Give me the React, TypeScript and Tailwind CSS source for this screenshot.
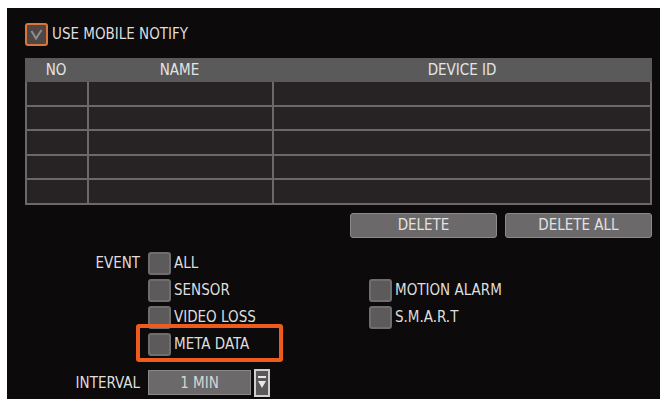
import React from "react";

const font = { fontFamily: '"DejaVu Sans Condensed", "DejaVu Sans", sans-serif' };

function Box({ checked, accent }: { checked?: boolean; accent?: boolean }) {
  return (
    <div
      className={`flex h-[23px] w-[23px] shrink-0 items-center justify-center rounded-[3px] border-2 ${
        accent ? "border-[#d9773a] bg-[#4e4746]" : "border-[#6f6d6e] bg-[#5c5a5b]"
      }`}
    >
      {checked && (
        <svg width="13" height="11" viewBox="0 0 13 11" fill="none">
          <path d="M1.5 2 L6 9.5 L11.5 1" stroke="#8f8f8f" strokeWidth="2" />
        </svg>
      )}
    </div>
  );
}

function Option({ label, children }: { label: string; children?: React.ReactNode }) {
  return (
    <div className="relative flex h-[27px] items-center gap-[3px]">
      {children}
      <Box />
      <span className="text-[15px] leading-none text-[#dedede]">{label}</span>
    </div>
  );
}

function Button({ label }: { label: string }) {
  return (
    <div className="flex h-[25px] w-[147px] items-center justify-center rounded-[3px] border border-[#8c8a8b] bg-[#6b696a] text-[15px] text-[#e2e2e2]">
      {label}
    </div>
  );
}

const rows = [0, 1, 2, 3, 4];

export default function App() {
  return (
    <div className="h-[401px] w-[665px] overflow-hidden bg-white pb-[2px] pl-[7px] pr-[5px] pt-[8px]" style={font}>
      <div className="flex h-full flex-col bg-[#0d0a0b] pl-[18px] pr-[8px] pt-[14px]">
        <div className="flex h-[24px] items-center gap-[4px]">
          <Box checked accent />
          <span className="text-[15px] leading-none text-[#dedede]">USE MOBILE NOTIFY</span>
        </div>

        {/* device list */}
        <div className="mt-[12px]">
          <div className="grid h-[24px] grid-cols-[62px_185px_1fr] items-center bg-[#5b5a5b] text-[15px] text-[#e4e4e4]">
            <span className="text-center">NO</span>
            <span className="text-center">NAME</span>
            <span className="text-center">DEVICE ID</span>
          </div>
          <div className="grid grid-cols-[60px_183px_1fr] gap-[2px] bg-[#6a6869] p-[2px] pt-0">
            {rows.map((r) => (
              <React.Fragment key={r}>
                <div className="h-[22.6px] bg-[#272324]" />
                <div className="h-[22.6px] bg-[#272324]" />
                <div className="h-[22.6px] bg-[#272324]" />
              </React.Fragment>
            ))}
          </div>
        </div>

        <div className="mt-[8px] flex justify-end gap-[8px]">
          <Button label="DELETE" />
          <Button label="DELETE ALL" />
        </div>

        {/* event filters */}
        <div className="mt-[12px] flex">
          <div className="w-[116px] pr-[1px] text-right text-[15px] leading-[27px] text-[#dedede]">EVENT</div>
          <div className="ml-[7px] flex flex-col">
            <Option label="ALL" />
            <div className="flex">
              <div className="w-[221px]">
                <Option label="SENSOR" />
                <Option label="VIDEO LOSS" />
                <Option label="META DATA">
                  <div className="absolute left-[-12px] top-[-7px] h-[38px] w-[147px] rounded-[3px] border-4 border-[#ee5b1c]" />
                </Option>
              </div>
              <div>
                <Option label="MOTION ALARM" />
                <Option label="S.M.A.R.T" />
              </div>
            </div>
          </div>
        </div>

        <div className="mt-[11px] flex items-center">
          <div className="w-[116px] pr-[1px] text-right text-[15px] text-[#dedede]">INTERVAL</div>
          <div className="ml-[7px] flex h-[25px] w-[103px] items-center justify-center border border-[#8a8889] bg-[#6b696a] text-[15px] text-[#d6d6d6]">
            1 MIN
          </div>
          <div className="ml-[3px] flex h-[28px] w-[16px] items-center justify-center border-2 border-[#cfcfcf] bg-[#5a5859]">
            <svg width="10" height="18" viewBox="0 0 10 18">
              <rect x="1" y="2" width="8" height="2" fill="#e8e8e8" />
              <path d="M1 7 L9 7 L5 14 Z" fill="#e8e8e8" />
            </svg>
          </div>
        </div>
      </div>
    </div>
  );
}
